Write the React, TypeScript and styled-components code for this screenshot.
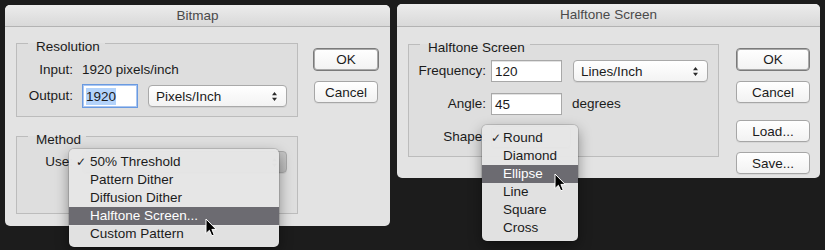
import styled, { createGlobalStyle } from 'styled-components';

const GlobalStyle = createGlobalStyle`
  html, body {
    margin: 0;
    padding: 0;
    background: #1c1c1c;
  }
  body {
    font-family: "Liberation Sans", Arial, sans-serif;
    font-size: 13.5px;
    color: #1b1b1b;
  }
`;

const bitmapMethods = ['50% Threshold', 'Pattern Dither', 'Diffusion Dither', 'Halftone Screen...', 'Custom Pattern'];
const shapes = ['Round', 'Diamond', 'Ellipse', 'Line', 'Square', 'Cross'];

const App = () => {
  return (
    <>
      <GlobalStyle />
      <Stage>
        <Dialog $w={385} $h={221} $top={1}>
          <TitleBar $h={21}>Bitmap</TitleBar>
          <Body $pad="5px 11px 12px" $gap={15}>
            <Column $gap={8}>
              <Group>
                <Legend>Resolution</Legend>
                <FormGrid $labelW={56} $colGap={9} $rowGap={5} $pad="7px 10px 8px 0">
                  <Label>Input:</Label>
                  <Value>1920 pixels/inch</Value>
                  <Label>Output:</Label>
                  <Controls>
                    <Field $w={56} $h={24} $focused>
                      <Selected>1920</Selected>
                    </Field>
                    <Select $w={139}>
                      Pixels/Inch
                      <Arrows />
                    </Select>
                  </Controls>
                </FormGrid>
              </Group>
              <Group>
                <Legend>Method</Legend>
                <FormGrid $labelW={56} $colGap={9} $rowGap={0} $pad="4px 10px 0 0" $minH={66}>
                  <Label>Use:</Label>
                  <Select $w={205} $pressed>
                    <Arrows />
                    <Menu $left={-14} $top={-3} $w={210}>
                      {bitmapMethods.map((m, i) => (
                        <MenuItem key={m} $active={i === 3}>
                          <Check>{i === 0 ? '✓' : ''}</Check>
                          {m}
                          {i === 3 && <Cursor $x={137} $y={11} />}
                        </MenuItem>
                      ))}
                    </Menu>
                  </Select>
                </FormGrid>
              </Group>
            </Column>
            <Buttons $top={16}>
              <Button $w={66} $primary>OK</Button>
              <Button $w={64}>Cancel</Button>
            </Buttons>
          </Body>
        </Dialog>

        <Dialog $w={423} $h={174}>
          <TitleBar $h={22}>Halftone Screen</TitleBar>
          <Body $pad="6px 10px 21px 11px" $gap={17}>
            <Column $gap={0}>
              <Group>
                <Legend>Halftone Screen</Legend>
                <FormGrid $labelW={77} $colGap={5} $rowGap={11} $pad="5px 10px 8px 0">
                  <Label>Frequency:</Label>
                  <Controls $gap={11}>
                    <Field $w={71} $h={22}>120</Field>
                    <Select $w={135}>
                      Lines/Inch
                      <Arrows />
                    </Select>
                  </Controls>
                  <Label>Angle:</Label>
                  <Controls $gap={10}>
                    <Field $w={71} $h={22}>45</Field>
                    <Value>degrees</Value>
                  </Controls>
                  <Label>Shape:</Label>
                  <Select $w={80}>
                    <Menu $left={-10} $top={-2} $w={96}>
                      {shapes.map((s, i) => (
                        <MenuItem key={s} $active={i === 2}>
                          <Check $indent={9}>{i === 0 ? '✓' : ''}</Check>
                          {s}
                          {i === 2 && <Cursor $x={73} $y={8} />}
                        </MenuItem>
                      ))}
                    </Menu>
                  </Select>
                </FormGrid>
              </Group>
            </Column>
            <Buttons $top={15}>
              <Button $w={74} $primary>OK</Button>
              <Button $w={74}>Cancel</Button>
              <Button $w={74} $gapBefore={7}>Load...</Button>
              <Button $w={74}>Save...</Button>
            </Buttons>
          </Body>
        </Dialog>
      </Stage>
    </>
  );
};

const Arrows = () => (
  <ArrowIcon width="7" height="11" viewBox="0 0 7 11">
    <path d="M3.5 1 L6 4.2 L1 4.2 Z M3.5 10 L6 6.8 L1 6.8 Z" fill="#2a2a2a" />
  </ArrowIcon>
);

const Cursor = ({ $x, $y }: { $x: number; $y: number }) => (
  <CursorIcon $x={$x} $y={$y} width="12" height="19" viewBox="0 0 12 19">
    <path
      d="M1 1 L1 15.5 L4.4 12.3 L6.8 17.8 L9.2 16.8 L6.9 11.4 L11.2 11.4 Z"
      fill="#000"
      stroke="#fff"
      strokeWidth="1"
      strokeLinejoin="round"
    />
  </CursorIcon>
);

export default App;

const Stage = styled.div`
  width: 825px;
  height: 250px;
  overflow: hidden;
  box-sizing: border-box;
  padding: 4px 0 0 5px;
  display: flex;
  align-items: flex-start;
  gap: 7px;
`;

const Dialog = styled.div<{ $w: number; $h: number; $top?: number }>`
  width: ${(p) => p.$w}px;
  height: ${(p) => p.$h}px;
  margin-top: ${(p) => p.$top ?? 0}px;
  flex-shrink: 0;
  display: flex;
  flex-direction: column;
  background: #e3e3e3;
  border-radius: 5px;
`;

const TitleBar = styled.div<{ $h: number }>`
  height: ${(p) => p.$h}px;
  line-height: ${(p) => p.$h}px;
  flex-shrink: 0;
  text-align: center;
  color: #4a4a4a;
  font-size: 13.5px;
  background: linear-gradient(#ececec, #d9d9d9);
  border-bottom: 1px solid #b3b3b3;
  border-radius: 5px 5px 0 0;
`;

const Body = styled.div<{ $pad: string; $gap: number }>`
  flex: 1;
  display: flex;
  align-items: flex-start;
  padding: ${(p) => p.$pad};
  gap: ${(p) => p.$gap}px;
`;

const Column = styled.div<{ $gap: number }>`
  flex: 1;
  display: flex;
  flex-direction: column;
  gap: ${(p) => p.$gap}px;
`;

const Group = styled.fieldset`
  margin: 0;
  padding: 0;
  min-width: 0;
  border: 1px solid #bcbcbc;
  background: #dedede;
`;

const Legend = styled.legend`
  margin-left: 11px;
  padding: 7px 5px 0 8px;
  line-height: 15px;
  color: #1b1b1b;
`;

const FormGrid = styled.div<{
  $labelW: number;
  $colGap: number;
  $rowGap: number;
  $pad: string;
  $minH?: number;
}>`
  display: grid;
  grid-template-columns: ${(p) => p.$labelW}px 1fr;
  grid-auto-rows: min-content;
  align-items: center;
  column-gap: ${(p) => p.$colGap}px;
  row-gap: ${(p) => p.$rowGap}px;
  padding: ${(p) => p.$pad};
  min-height: ${(p) => p.$minH ?? 0}px;
  box-sizing: border-box;
`;

const Label = styled.div`
  text-align: right;
  white-space: nowrap;
  line-height: 18px;
`;

const Value = styled.div`
  white-space: nowrap;
  line-height: 18px;
`;

const Controls = styled.div<{ $gap?: number }>`
  display: flex;
  align-items: center;
  gap: ${(p) => p.$gap ?? 10}px;
`;

const Field = styled.div<{ $w: number; $h: number; $focused?: boolean }>`
  width: ${(p) => p.$w}px;
  height: ${(p) => p.$h}px;
  box-sizing: border-box;
  padding: 0 3px;
  display: flex;
  align-items: center;
  background: #fff;
  border: 1px solid ${(p) => (p.$focused ? '#6a9ae0' : '#a8a8a8')};
  box-shadow: ${(p) => (p.$focused ? 'inset 0 0 0 1px #a9c6f2' : 'inset 0 1px 0 #e2e2e2')};
`;

const Selected = styled.span`
  background: #b3d3fb;
  padding: 1px 0;
`;

const Select = styled.div<{ $w: number; $pressed?: boolean }>`
  position: relative;
  width: ${(p) => p.$w}px;
  height: 22px;
  box-sizing: border-box;
  padding: 0 7px;
  display: flex;
  align-items: center;
  justify-content: space-between;
  white-space: nowrap;
  border: 1px solid #a9a9a9;
  border-radius: 4px;
  background: ${(p) => (p.$pressed ? 'linear-gradient(#c6c6c6, #bcbcbc)' : 'linear-gradient(#ffffff, #f3f3f3)')};
  box-shadow: 0 1px 0 rgba(0, 0, 0, 0.06);
`;

const ArrowIcon = styled.svg`
  margin-left: auto;
  margin-right: 1px;
`;

const Menu = styled.div<{ $left: number; $top: number; $w: number }>`
  position: absolute;
  left: ${(p) => p.$left}px;
  top: ${(p) => p.$top}px;
  width: ${(p) => p.$w}px;
  box-sizing: border-box;
  padding: 4px 0;
  background: rgba(230, 230, 230, 0.98);
  border-radius: 5px;
  box-shadow: 0 0 0 1px rgba(0, 0, 0, 0.12), 0 5px 14px rgba(0, 0, 0, 0.4);
  z-index: 2;
`;

const MenuItem = styled.div<{ $active?: boolean }>`
  position: relative;
  height: 18px;
  line-height: 18px;
  display: flex;
  align-items: center;
  white-space: nowrap;
  color: ${(p) => (p.$active ? '#fff' : '#1b1b1b')};
  background: ${(p) => (p.$active ? '#6c6b71' : 'transparent')};
`;

const Check = styled.span<{ $indent?: number }>`
  width: 21px;
  padding-left: ${(p) => p.$indent ?? 7}px;
  box-sizing: border-box;
  flex-shrink: 0;
  font-family: "DejaVu Sans", sans-serif;
  font-size: 12px;
`;

const CursorIcon = styled.svg<{ $x: number; $y: number }>`
  position: absolute;
  left: ${(p) => p.$x - 1}px;
  top: ${(p) => p.$y}px;
  overflow: visible;
  z-index: 3;
`;

const Buttons = styled.div<{ $top: number }>`
  margin-top: ${(p) => p.$top}px;
  display: flex;
  flex-direction: column;
  align-items: center;
  gap: 10px;
`;

const Button = styled.div<{ $w: number; $primary?: boolean; $gapBefore?: number }>`
  width: ${(p) => p.$w}px;
  height: ${(p) => (p.$primary ? 23 : 22)}px;
  margin-top: ${(p) => p.$gapBefore ?? 0}px;
  box-sizing: border-box;
  display: flex;
  align-items: center;
  justify-content: center;
  border-radius: 4px;
  background: linear-gradient(#ffffff, #f2f2f2);
  border: 1px solid ${(p) => (p.$primary ? '#7a7a7a' : '#a6a6a6')};
  box-shadow: ${(p) => (p.$primary ? 'inset 0 0 0 1px #a9a9a9' : '0 1px 0 rgba(0,0,0,0.05)')};
  color: #1b1b1b;
`;
